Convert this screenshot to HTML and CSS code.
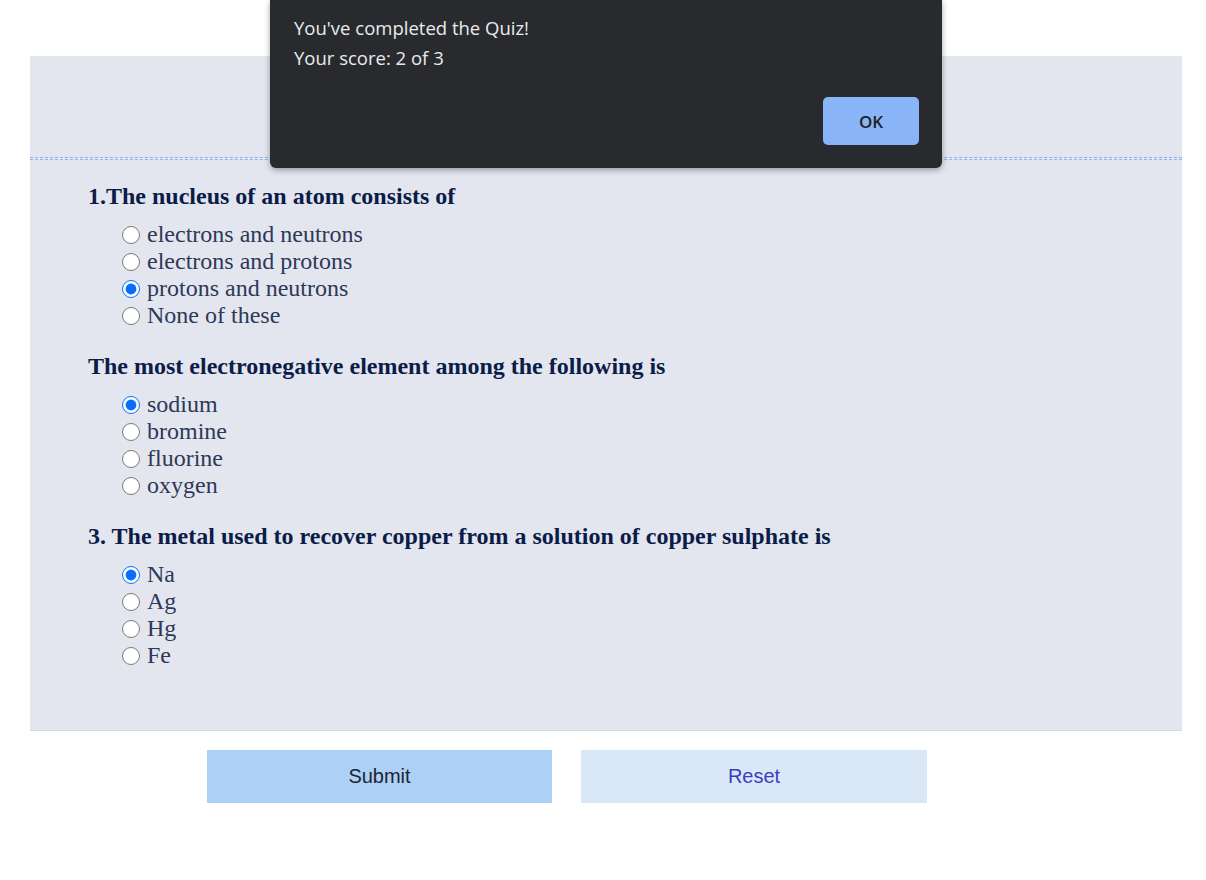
FILE: index.html
```html
<!DOCTYPE html>
<html>
<head>
<meta charset="utf-8">
<link rel="stylesheet" href="styles.css">
</head>
<body>
<div class="quiz">
  <div class="quiz-head"></div>
  <div class="rule"></div>
  <div class="questions">
    <div class="question">
      <h3 class="q-title">1.The nucleus of an atom consists of</h3>
      <ul class="options">
        <li><label><input type="radio" name="q1"> electrons and neutrons</label></li>
        <li><label><input type="radio" name="q1"> electrons and protons</label></li>
        <li><label><input type="radio" name="q1" checked> protons and neutrons</label></li>
        <li><label><input type="radio" name="q1"> None of these</label></li>
      </ul>
    </div>
    <div class="question">
      <h3 class="q-title">The most electronegative element among the following is</h3>
      <ul class="options">
        <li><label><input type="radio" name="q2" checked> sodium</label></li>
        <li><label><input type="radio" name="q2"> bromine</label></li>
        <li><label><input type="radio" name="q2"> fluorine</label></li>
        <li><label><input type="radio" name="q2"> oxygen</label></li>
      </ul>
    </div>
    <div class="question">
      <h3 class="q-title">3. The metal used to recover copper from a solution of copper sulphate is</h3>
      <ul class="options">
        <li><label><input type="radio" name="q3" checked> Na</label></li>
        <li><label><input type="radio" name="q3"> Ag</label></li>
        <li><label><input type="radio" name="q3"> Hg</label></li>
        <li><label><input type="radio" name="q3"> Fe</label></li>
      </ul>
    </div>
  </div>
</div>
<div class="actions">
  <button class="btn btn-submit">Submit</button>
  <button class="btn btn-reset">Reset</button>
</div>

<div class="dialog">
  <p class="dialog-line">You've completed the Quiz!</p>
  <p class="dialog-line">Your score: 2 of 3</p>
  <div class="dialog-actions">
    <button class="dialog-ok">OK</button>
  </div>
</div>
</body>
</html>
```

FILE: styles.css
```css
html, body {
  margin: 0;
  padding: 0;
  background: #ffffff;
}
body {
  padding: 56px 24px 0 30px;
  font-family: "Liberation Serif", "Times New Roman", serif;
}
.quiz {
  background: #e3e6ee;
  height: 675px;
  box-sizing: border-box;
  border-bottom: 1px solid #d6dae4;
}
.quiz-head {
  height: 101px;
}
.rule {
  height: 1px;
  border-top: 1px dashed #8ab4f8;
  border-bottom: 1px dashed #8ab4f8;
}
.questions {
  padding: 23px 0 0 58px;
}
.question {
  margin-bottom: 24px;
}
.q-title {
  margin: 0 0 12px 0;
  font-size: 24px;
  font-weight: bold;
  color: #0c1c48;
  line-height: 26px;
}
.options {
  list-style: none;
  margin: 0;
  padding: 0 0 0 34px;
}
.options li {
  font-size: 24px;
  height: 27px;
  line-height: 27px;
  color: #2e3858;
}
.options label {
  display: flex;
  align-items: center;
  height: 27px;
}
.options input {
  margin: 0 7px 0 0;
  width: 18px;
  height: 18px;
  accent-color: #0a6cff;
}
.actions {
  display: flex;
  gap: 29px;
  padding: 19px 0 0 177px;
}
.btn {
  width: 345px;
  height: 53px;
  border: none;
  font-family: "Liberation Sans", Arial, sans-serif;
  font-size: 20px;
  cursor: pointer;
}
.btn-submit {
  background: #acd0f6;
  color: #1c2533;
}
.btn-reset {
  width: 346px;
  background: #dae7f7;
  color: #3a3dc0;
}
.dialog {
  position: absolute;
  left: 270px;
  top: 0;
  width: 672px;
  height: 168px;
  box-sizing: border-box;
  background: #292a2d;
  border-radius: 0 0 6px 6px;
  box-shadow: 0 2px 6px rgba(0,0,0,0.35);
  padding: 13px 23px 0 24px;
  font-family: "Open Sans", "Noto Sans", sans-serif;
  color: #e8eaed;
}
.dialog-line {
  margin: 0;
  font-size: 18.5px;
  line-height: 30px;
}
.dialog-actions {
  display: flex;
  justify-content: flex-end;
  margin-top: 24px;
}
.dialog-ok {
  width: 96px;
  height: 48px;
  border: none;
  border-radius: 5px;
  background: #8ab4f8;
  color: #202124;
  font-family: "Open Sans", "Noto Sans", sans-serif;
  font-size: 17px;
  font-weight: 600;
}
```
